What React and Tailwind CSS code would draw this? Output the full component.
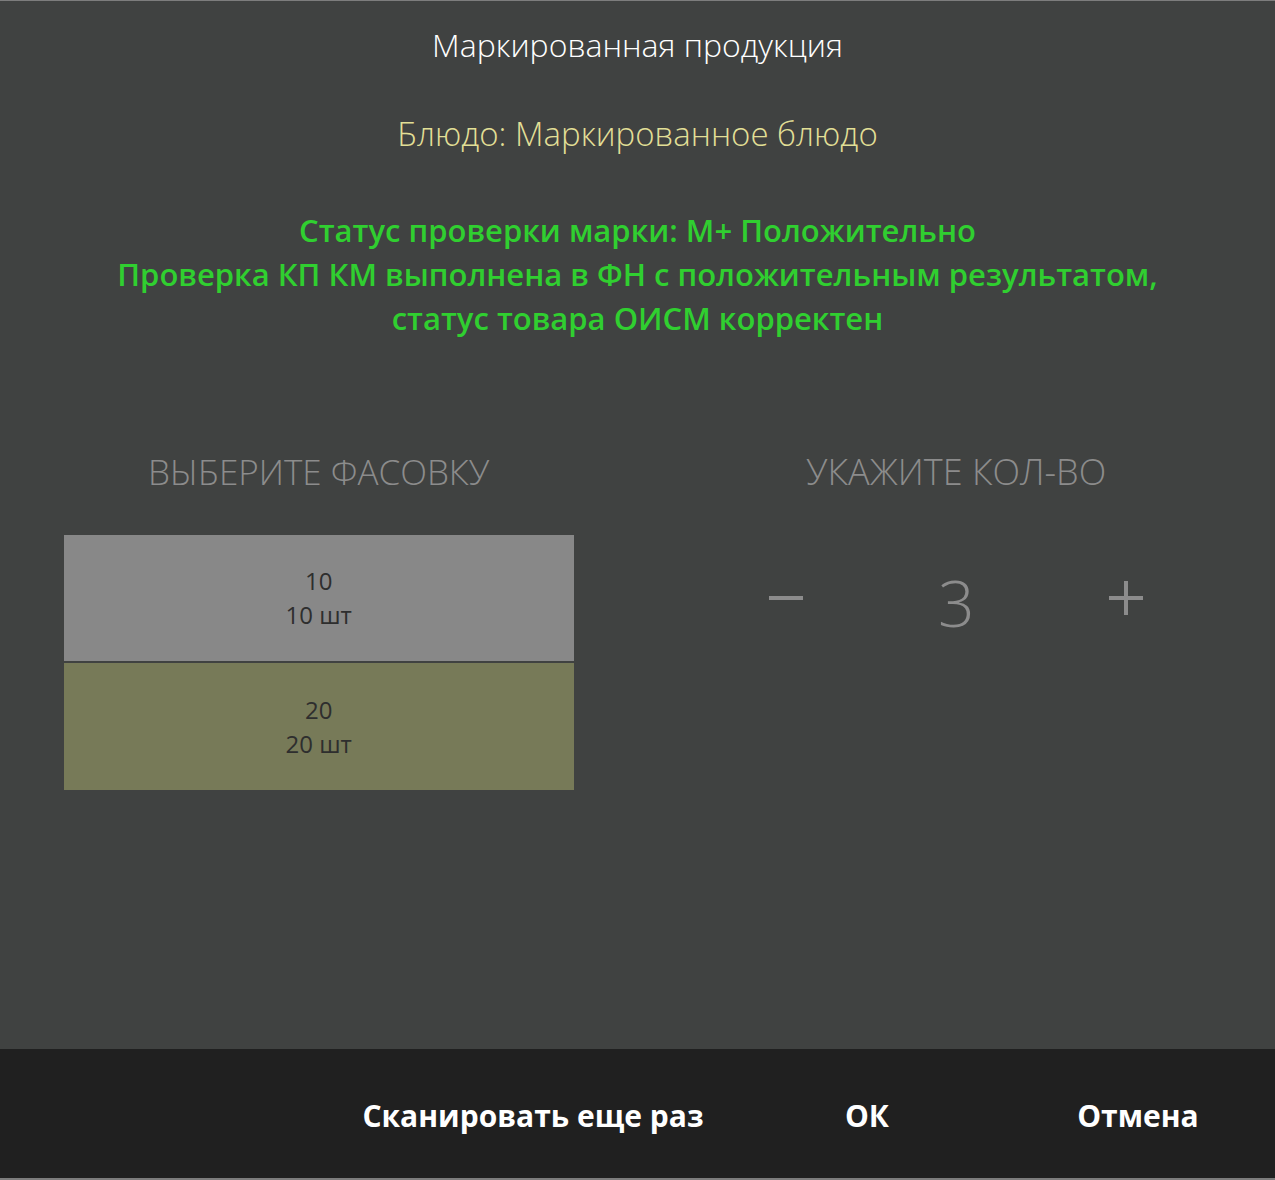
import React from "react";

const font = { fontFamily: '"Open Sans", "Noto Sans", sans-serif' };

export default function App() {
  return (
    <div
      style={font}
      className="w-[1275px] h-[1180px] bg-[#404241] flex flex-col border-t border-b-2 border-[#7d7d7d] overflow-hidden"
    >
      <div className="flex-1 flex flex-col">
        <div className="pt-[26px] text-center text-[32px] leading-[36px] font-light text-white">
          Маркированная продукция
        </div>
        <div className="mt-[51px] text-center text-[33px] leading-[40px] font-light text-[#e2df96]">
          Блюдо: Маркированное блюдо
        </div>
        <div className="mt-[54px] text-center text-[31px] leading-[44px] font-semibold text-[#30cf30]">
          <div>Статус проверки марки: М+ Положительно</div>
          <div>Проверка КП КМ выполнена в ФН с положительным результатом,</div>
          <div>статус товара ОИСМ корректен</div>
        </div>

        <div className="mt-[110px] grid grid-cols-2">
          <div className="flex flex-col px-[64px]">
            <div className="text-center text-[35px] leading-[44px] font-light text-[#8c8c8c]">
              ВЫБЕРИТЕ ФАСОВКУ
            </div>
            <div className="mt-[41px] flex flex-col gap-[2px]">
              <button className="h-[126px] bg-[#888888] flex flex-col items-center justify-center text-[24px] leading-[34px] text-[#2e2e2e]">
                <span>10</span>
                <span>10 шт</span>
              </button>
              <button className="h-[127px] bg-[#777a58] flex flex-col items-center justify-center text-[24px] leading-[34px] text-[#2e2e2e]">
                <span>20</span>
                <span>20 шт</span>
              </button>
            </div>
          </div>
          <div className="flex flex-col px-[64px]">
            <div className="text-center text-[36px] leading-[44px] font-light text-[#8c8c8c]">
              УКАЖИТЕ КОЛ-ВО
            </div>
            <div className="mt-[69px] h-[70px] grid grid-cols-3 text-[#8c8c8c]">
              <div className="flex items-center justify-center pb-[10px]">
                <svg width="34" height="34" viewBox="0 0 34 34">
                  <rect x="0" y="15" width="34" height="4" fill="#8c8c8c" />
                </svg>
              </div>
              <div className="text-center text-[64px] leading-[80px] font-light">3</div>
              <div className="flex items-center justify-center pb-[10px]">
                <svg width="34" height="34" viewBox="0 0 34 34">
                  <rect x="0" y="15" width="34" height="4" fill="#8c8c8c" />
                  <rect x="15" y="0" width="4" height="34" fill="#8c8c8c" />
                </svg>
              </div>
            </div>
          </div>
        </div>
      </div>

      <div className="h-[129px] bg-[#202020] flex items-center justify-end pt-[4px] pr-[7px] text-white font-bold text-[30px]">
        <button className="w-[386px] text-center">Сканировать еще раз</button>
        <button className="w-[282px] text-center">ОК</button>
        <button className="w-[260px] text-center">Отмена</button>
      </div>
    </div>
  );
}
